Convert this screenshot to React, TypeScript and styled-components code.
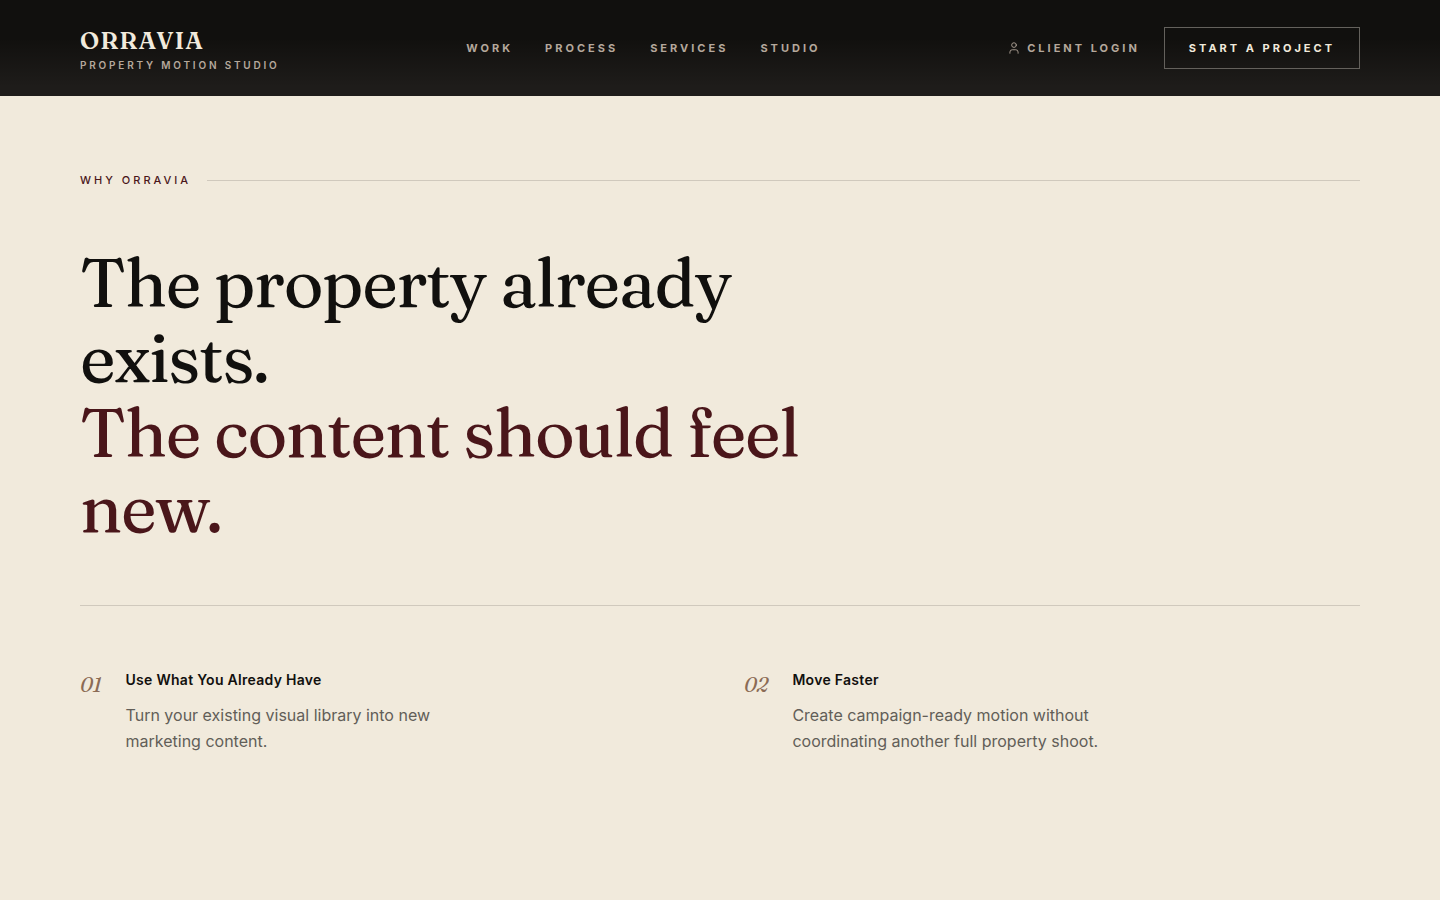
import React from "react";
import styled, { createGlobalStyle } from "styled-components";
import { User } from "lucide-react";

const GlobalStyle = createGlobalStyle`
  *, *::before, *::after { box-sizing: border-box; }
  body {
    margin: 0;
    background: #f1eadc;
    color: #11100e;
    font-family: Inter, "Liberation Sans", sans-serif;
  }
  h1, h2, h3, p, ul, ol { margin: 0; padding: 0; }
  ul, ol { list-style: none; }
  a { color: inherit; text-decoration: none; }
`;

const serif = `Fraunces, "Liberation Serif", serif`;

const Header = styled.header`
  display: flex;
  align-items: center;
  justify-content: space-between;
  height: 96px;
  padding: 0 80px;
  background: linear-gradient(to bottom, #11100e 0%, #11100e 40%, #1e1c1a 90%);
`;

const Brand = styled.a`
  display: flex;
  flex-direction: column;
  gap: 4px;
  padding-top: 2px;
`;

const BrandName = styled.span`
  font-family: ${serif};
  font-size: 24px;
  font-weight: 600;
  line-height: 28px;
  letter-spacing: 1px;
  color: #f1eadc;
`;

const BrandTag = styled.span`
  font-size: 10px;
  font-weight: 600;
  line-height: 12px;
  letter-spacing: 0.28em;
  text-transform: uppercase;
  color: #b5a89c;
`;

const NavList = styled.ul`
  display: flex;
  gap: 32px;
`;

const NavLink = styled.a`
  display: flex;
  align-items: center;
  gap: 6px;
  font-size: 11px;
  font-weight: 700;
  line-height: 16px;
  letter-spacing: 3px;
  text-transform: uppercase;
  white-space: nowrap;
  color: #b5a89c;
`;

const Actions = styled.div`
  display: flex;
  align-items: center;
  gap: 24px;
`;

const ProjectButton = styled.button`
  height: 42px;
  padding: 0 24px;
  border: 1px solid #64615c;
  background: transparent;
  color: #f1eadc;
  font: 700 11px/16px Inter, "Liberation Sans", sans-serif;
  letter-spacing: 3px;
  text-transform: uppercase;
  white-space: nowrap;
  cursor: pointer;
`;

const Section = styled.section`
  padding: 76px 80px;
`;

const Eyebrow = styled.p`
  display: flex;
  align-items: center;
  gap: 16px;
  font-size: 11px;
  font-weight: 500;
  line-height: 16px;
  letter-spacing: 3px;
  text-transform: uppercase;
  color: #4a161a;

  &::after {
    content: "";
    flex: 1;
    height: 1px;
    background: #d0c9bd;
  }
`;

const Headline = styled.h1`
  max-width: 768px;
  margin-top: 57px;
  font-family: ${serif};
  font-size: 68px;
  font-weight: 400;
  line-height: 75px;
  letter-spacing: -0.02em;
`;

const Accent = styled.span`
  display: block;
  color: #4a161a;
`;

const Features = styled.ol`
  display: grid;
  grid-template-columns: repeat(2, 1fr);
  gap: 48px;
  margin-top: 60px;
  padding-top: 64px;
  border-top: 1px solid #d0c9bd;
`;

const Feature = styled.li`
  display: flex;
  gap: 24px;
`;

const FeatureNumber = styled.span`
  font-family: ${serif};
  font-size: 20px;
  font-style: italic;
  font-weight: 400;
  line-height: 30px;
  color: #8b6b55;
`;

const FeatureTitle = styled.h2`
  font-size: 14px;
  font-weight: 600;
  line-height: 20px;
  letter-spacing: 0.02em;
`;

const FeatureText = styled.p`
  max-width: 320px;
  margin-top: 12px;
  font-size: 16px;
  font-weight: 400;
  line-height: 26px;
  color: #625e58;
`;

const links = ["Work", "Process", "Services", "Studio"];

const features = [
  {
    number: "01",
    title: "Use What You Already Have",
    text: "Turn your existing visual library into new marketing content.",
  },
  {
    number: "02",
    title: "Move Faster",
    text: "Create campaign-ready motion without coordinating another full property shoot.",
  },
];

export default function App() {
  return (
    <>
      <GlobalStyle />
      <Header>
        <Brand href="#">
          <BrandName>ORRAVIA</BrandName>
          <BrandTag>Property Motion Studio</BrandTag>
        </Brand>
        <nav>
          <NavList>
            {links.map((link) => (
              <li key={link}>
                <NavLink href={`#${link.toLowerCase()}`}>{link}</NavLink>
              </li>
            ))}
          </NavList>
        </nav>
        <Actions>
          <NavLink href="#login">
            <User size={14} strokeWidth={1.5} aria-hidden />
            Client Login
          </NavLink>
          <ProjectButton type="button">Start a Project</ProjectButton>
        </Actions>
      </Header>
      <main>
        <Section>
          <Eyebrow>Why Orravia</Eyebrow>
          <Headline>
            The property already exists. <Accent>The content should feel new.</Accent>
          </Headline>
          <Features>
            {features.map(({ number, title, text }) => (
              <Feature key={number}>
                <FeatureNumber>{number}</FeatureNumber>
                <div>
                  <FeatureTitle>{title}</FeatureTitle>
                  <FeatureText>{text}</FeatureText>
                </div>
              </Feature>
            ))}
          </Features>
        </Section>
      </main>
    </>
  );
}
